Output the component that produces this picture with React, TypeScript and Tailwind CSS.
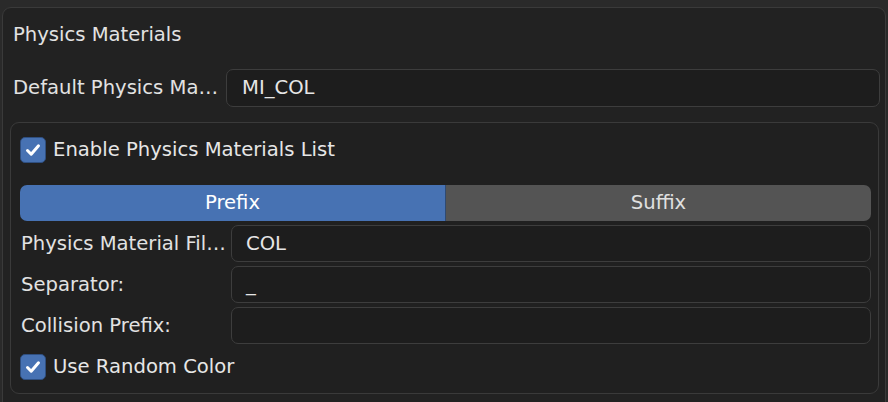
import React from 'react';

const font = { fontFamily: '"DejaVu Sans", "Liberation Sans", sans-serif' };

function Check({ checked }: { checked: boolean }) {
  return (
    <div className="w-[26px] h-[26px] rounded-[5px] border border-[#2f4f80] bg-[#4772b3] flex items-center justify-center shrink-0">
      {checked && (
        <svg width="18" height="18" viewBox="0 0 18 18" fill="none">
          <path d="M3.5 9.5 L7.2 13.2 L14.5 4.8" stroke="#ffffff" strokeWidth="3" strokeLinecap="round" strokeLinejoin="round" />
        </svg>
      )}
    </div>
  );
}

function Field({ label, value, labelWidth }: { label: string; value?: string; labelWidth: string }) {
  return (
    <div className="flex items-center h-[37px]">
      <div className={`${labelWidth} shrink-0 text-[#e2e2e2] whitespace-nowrap`}>{label}</div>
      <div className="flex-1 h-full rounded-[7px] border border-[#3d3d3d] bg-[#1d1d1d] flex items-center pl-[14px] text-[#e6e6e6]">
        {value}
      </div>
    </div>
  );
}

export default function App() {
  return (
    <div className="w-[888px] h-[402px] overflow-hidden bg-[#2a2a2a] pt-[7px] px-[2px] text-[19.6px]" style={font}>
      <div className="h-[420px] rounded-[9px] border border-[#3a3a3a] bg-[#222222] px-[7px]">
        {/* Title */}
        <div className="h-[54px] flex items-center pl-[3px] text-[#e2e2e2]">Physics Materials</div>

        {/* Default material */}
        <div className="mt-[7px] pl-[3px] mr-[-2px]">
          <div className="flex items-center h-[38px]">
            <div className="w-[213px] shrink-0 text-[#e2e2e2] whitespace-nowrap">Default Physics Ma…</div>
            <div className="flex-1 h-full rounded-[7px] border border-[#3d3d3d] bg-[#1d1d1d] flex items-center pl-[15px] text-[#e6e6e6]">
              MI_COL
            </div>
          </div>
        </div>

        {/* Sub panel */}
        <div className="mt-[15px] rounded-[9px] border border-[#3a3a3a] bg-[#202020] pl-[9px] pr-[7px] pt-[14px] pb-[13px] mr-[-1px]">
          <div className="flex items-center gap-[7px] h-[26px]">
            <Check checked />
            <span className="text-[#e6e6e6]">Enable Physics Materials List</span>
          </div>

          <div className="mt-[22px] h-[36px] flex rounded-[7px] overflow-hidden">
            <div className="flex-1 bg-[#4772b3] flex items-center justify-center text-white">Prefix</div>
            <div className="w-[1px] bg-[#2f4a72]" />
            <div className="flex-1 bg-[#545454] flex items-center justify-center text-[#e0e0e0]">Suffix</div>
          </div>

          <div className="mt-[4px] flex flex-col gap-[4px] pl-[1px]">
            <Field label="Physics Material Fil…" value="COL" labelWidth="w-[210px]" />
            <Field label="Separator:" value="_" labelWidth="w-[210px]" />
            <Field label="Collision Prefix:" labelWidth="w-[210px]" />
          </div>

          <div className="mt-[10px] flex items-center gap-[7px] h-[26px]">
            <Check checked />
            <span className="text-[#e6e6e6]">Use Random Color</span>
          </div>
        </div>
      </div>
    </div>
  );
}
